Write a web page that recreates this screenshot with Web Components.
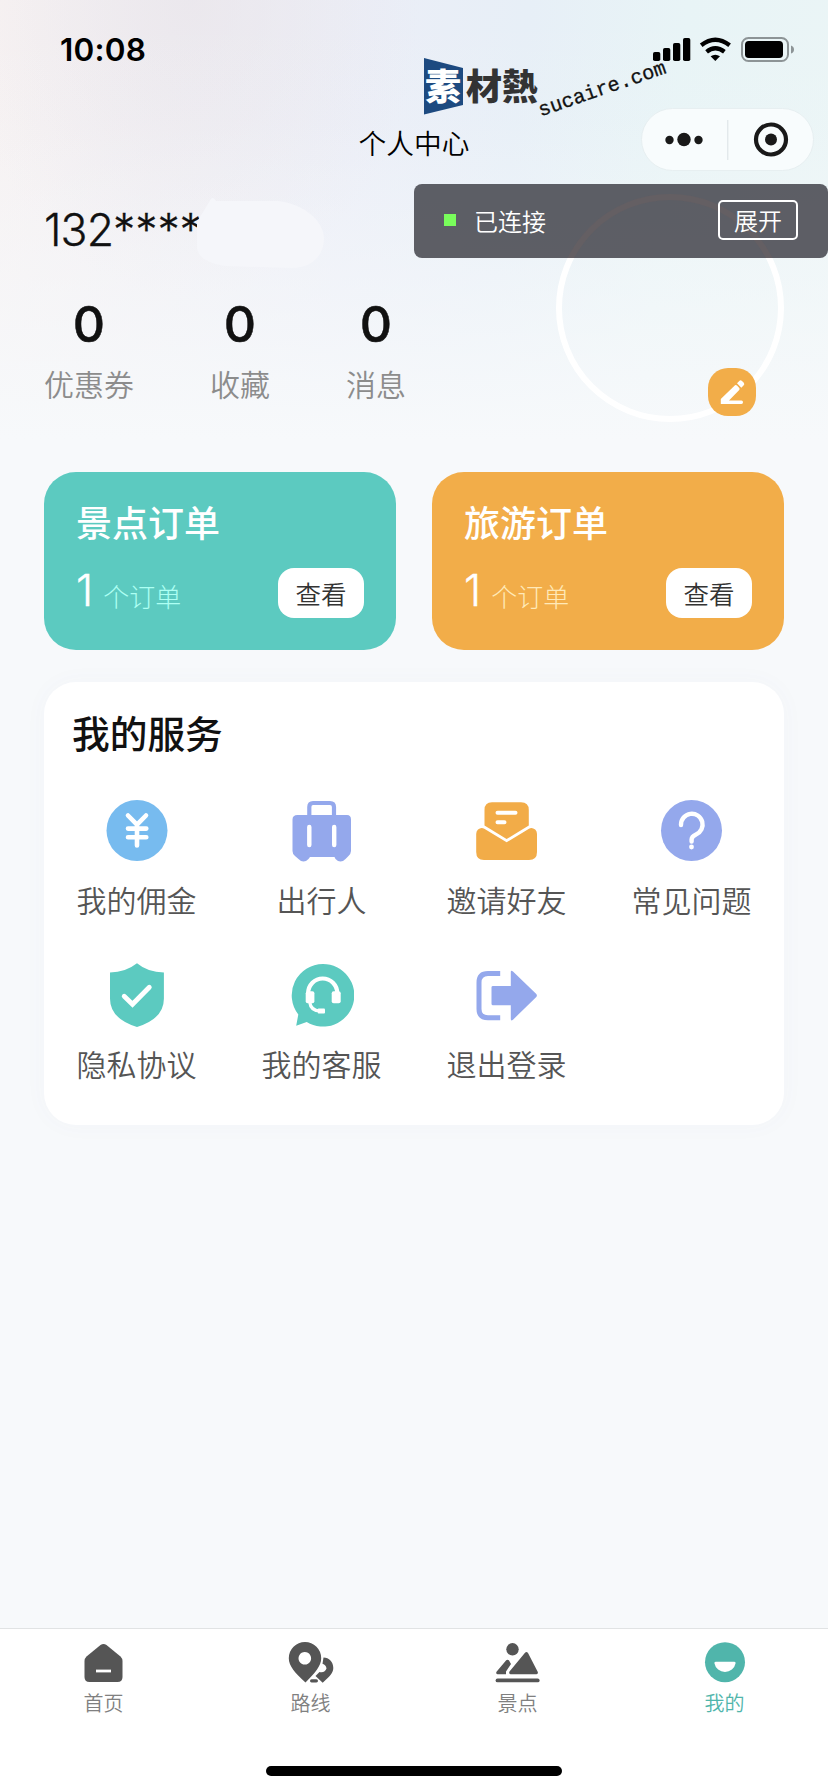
<!DOCTYPE html>
<html lang="zh-CN">
<head>
<meta charset="utf-8">
<title>个人中心</title>
<style>
html,body{margin:0;padding:0}
body{width:828px;height:1792px;overflow:hidden;background:#f7f9fb;font-family:"Noto Sans CJK SC",sans-serif}
</style>
</head>
<body>
<profile-page></profile-page>
<script>
const define = (name, css, html) => customElements.define(name, class extends HTMLElement {
  constructor() {
    super();
    const t = document.createElement('template');
    t.innerHTML = `<style>*{box-sizing:border-box}svg{display:block}${css}</style>${typeof html === 'function' ? html(this) : html}`;
    this.attachShadow({mode: 'open'}).append(t.content.cloneNode(true));
  }
});

const ICONS = {
  yen: `<circle cx="33" cy="32.500" r="30.500" fill="#77bbef"/><path d="M24 17.500 33 26.700 42 17.500M33 27V47.500M24 30.600H42.300M24 39.300H42.300" stroke="#fff" stroke-width="4.600" stroke-linecap="round" stroke-linejoin="round" fill="none"/>`,
  bag: `<g transform="translate(1 0)"><path d="M19.300 19V9Q19.300 5 23 5H40Q44 5 44 9V19" fill="none" stroke="#94a8ec" stroke-width="4.200"/><path d="M7.500 17H57Q61 17 61 21.500V53Q61 56 58 58.500L55.500 61Q50.500 66 45.500 61L44.500 59H20L18.500 61Q13.500 66 8.500 61L5 58Q2.500 56 2.500 53V21.500Q2.500 17 7.500 17Z" fill="#94a8ec"/><path d="M19.300 29V47M44.200 29V47" stroke="#fff" stroke-width="4.400" stroke-linecap="round"/></g>`,
  mail: `<path d="M10.500 27.500V12Q10.500 4.300 18 4.300H47Q54.800 4.300 54.800 12V27.500L32.600 41Z" fill="#f2ac48"/><path d="M23.500 14.700H41.500M23.500 24.300H30.500" stroke="#fff" stroke-width="4" stroke-linecap="round"/><path d="M32.600 44.300 10.300 30.700Q7 29 4 31.600Q2.200 33.200 2.200 36V54Q2.200 62 10 62H55Q63 62 63 54V36Q63 33.200 61.200 31.600Q58 29 55 30.700Z" fill="#f2ac48"/>`,
  help: `<circle cx="32.500" cy="32.500" r="30.500" fill="#94a8ec"/><path d="M22 27V26.600A10.800 10.800 0 1 1 37 36.500Q32.600 38.500 32.600 41.500V43.500" fill="none" stroke="#fff" stroke-width="4.400" stroke-linecap="round"/><circle cx="32.500" cy="49" r="2.400" fill="#fff"/>`,
  shield: `<g transform="translate(.7 .7)"><path d="M32.300 .500Q43 9.500 59.200 9.700V36Q59.200 56 32.300 64.300Q5.300 56 5.300 36V9.700Q21 9.500 32.300 .500Z" fill="#5ccac0"/><path d="M19.500 33.500 27.800 41.600 44.600 24.500" fill="none" stroke="#fff" stroke-width="4.800" stroke-linecap="round"/></g>`,
  service: `<g transform="translate(.7 0)"><path d="M33.300 2A31.300 31.300 0 1 1 17 60L6.500 63.800L8.600 52.500A31.300 31.300 0 0 1 33.300 2Z" fill="#5ccac0"/><path d="M18.500 31A14.500 14.500 0 0 1 47.500 31" fill="none" stroke="#fff" stroke-width="4.200"/><rect x="16" y="29.300" width="8.700" height="12" rx="2" fill="#fff"/><rect x="42" y="29.300" width="9" height="12" rx="2" fill="#fff"/><path d="M20 40Q21 48.500 30 49" fill="none" stroke="#fff" stroke-width="3.200"/><rect x="28" y="46.500" width="7.300" height="5" rx="1" fill="#fff"/></g>`,
  logout: `<path d="M26.200 11.600H14Q5 11.600 5 20.600V47Q5 55.700 14 55.700H26.200" fill="none" stroke="#94a8ec" stroke-width="5"/><path d="M17.500 25.300Q17.500 24 19 24H36.800V10Q36.800 7.700 39 9.500L62.300 32Q63.500 33.500 62.300 35L39 57.700Q36.800 59.500 36.800 57V43.300H19Q17.500 43.300 17.500 41.800Z" fill="#94a8ec"/>`,
  home: `<path d="M20.500 3Q23.500 .800 26.500 3L40.500 14.500Q42.500 16.500 42.500 19V35Q42.500 40 37.500 40H9.500Q4.500 40 4.500 35V19Q4.500 16.500 6.500 14.500Z" fill="#555"/><path d="M16 29H31" stroke="#fff" stroke-width="2.800"/>`,
  route: `<path fill="#555" fill-rule="evenodd" d="M18 0A16.200 16.200 0 0 1 34.200 16.200C34.200 24 28 31 18.500 40.500C8 31 1.800 24 1.800 16.200A16.200 16.200 0 0 1 18 0ZM17.800 10A6.300 6.300 0 1 0 17.801 10Z"/><path fill="#555" d="M36.500 15.500C42 15.500 46.300 20 46.300 26C46.300 31 42.500 34.500 35.700 40.700L28.500 34L32.500 30Q38 31 39.500 26.500Q39 23 35.500 21.800Z"/><rect x="23" y="37.200" width="8" height="3.200" rx="1.600" fill="#555"/>`,
  spot: `<circle cx="18.500" cy="7.300" r="6.200" fill="#555"/><path fill="#555" d="M2.500 29.800 12.200 18.300Q13.500 17 14.900 18.300L17 22L12 29.500V32.300H3.500Q1.500 32 2.500 29.800ZM15.500 29.500 31 10.800Q32.500 9.300 34 11L43.800 30Q44.300 32 42.500 32.300H16.500Q14.500 31.700 15.500 29.500Z"/><rect x="1.600" y="36.500" width="44" height="3.800" rx="1.900" fill="#555"/>`,
  me: `<circle cx="24" cy="20.200" r="20" fill="#50b5ab"/><path d="M14.600 19.800H33.400Q34.900 19.800 34.600 21.300A10.800 10.800 0 0 1 13.400 21.300Q13.100 19.800 14.600 19.800Z" fill="#fff"/>`
};

define('status-bar', `
:host{display:flex;justify-content:space-between;height:100px;padding:32px 33px 0 60px}
time{font:600 31.500px/36px Inter,sans-serif;color:#000;letter-spacing:.2px}
svg{margin-top:4px}`, `
<time>10:08</time>
<svg width="144" height="28" viewBox="651 36 144 28">
<g fill="#000"><rect x="653" y="52" width="7.300" height="9" rx="1.800"/><rect x="663" y="48" width="7.300" height="13" rx="1.800"/><rect x="673" y="43" width="7.300" height="18" rx="1.800"/><rect x="683" y="38" width="7.300" height="23" rx="1.800"/>
<path d="M715.300 61 710.600 56.300Q715.300 53 720 56.300Z"/></g>
<g fill="none" stroke="#000" stroke-width="4.300"><path d="M701.200 45.300Q715.300 34.200 729.600 45.300"/><path d="M706.600 51.800Q715.300 44.700 724.400 51.800"/></g>
<rect x="742" y="38" width="46" height="23" rx="6.500" fill="none" stroke="#8d9496" stroke-width="2"/><rect x="745" y="41" width="38" height="17" rx="3.800"/><path d="M791 45.500Q794 46.500 794 49.500T791 53.500Z" fill="#8d9496"/></svg>`);

define('capsule-menu', `
:host{display:flex;align-items:center;width:173px;height:63px;border-radius:32px;background:#f8fcfd;border:1px solid #e7eff1}`, `
<svg width="171" height="61" viewBox="0 0 171 61"><g fill="#191919"><circle cx="27.500" cy="31" r="4.200"/><circle cx="42" cy="30.500" r="6.700"/><circle cx="56.500" cy="31" r="4.200"/><circle cx="129" cy="30.500" r="6"/></g><circle cx="129" cy="30.500" r="15" fill="none" stroke="#191919" stroke-width="4.200"/><path d="M85.800 11V51" stroke="#dbe2e4"/></svg>`);

define('nav-bar', `
:host{display:grid;grid-template-columns:1fr auto 1fr;height:88px;align-items:center;padding-right:14px}
h1{grid-column:2;margin:-4px -14px 0 0;font:350 27.700px/40px "Noto Sans CJK SC",sans-serif;color:#000}
capsule-menu{justify-self:end;margin-bottom:9px}`, `<h1>个人中心</h1><capsule-menu></capsule-menu>`);

define('stat-item', `
:host{display:flex;flex-direction:column;align-items:center}
b{font:500 50px/60px Inter,sans-serif;color:#111;-webkit-text-stroke:.5px #111}
span{font:350 30px/44px "Noto Sans CJK SC",sans-serif;color:#8c8c8c;margin-top:7px}`, `<b><slot name="n"></slot></b><span><slot></slot></span>`);

define('user-avatar', `
:host{display:block;position:relative;width:228px;height:228px;border:6px solid #fff;border-radius:50%}
i{position:absolute;right:22px;bottom:0;width:48px;height:48px;border-radius:20px;background:#f2ad49}`, `
<i><svg width="48" height="48" viewBox="0 0 48 48"><path fill="#fff" d="M12.800 36V31L27 17.300Q28 16.500 29 17.500L31.300 20Q32 21 31.200 22L21 32.500H33.500Q35 32.500 35 34.200T33.500 36ZM29 15.300 31.300 13Q32.500 11.500 34 13L35.800 14.800Q37 16.200 35.500 17.500L33.300 19.700Z"/></svg></i>`);

define('profile-head', `
:host{display:flex;justify-content:space-between;height:284px;padding:6px 44px 0;position:relative}
.phone{font:300 44.500px/60px Inter,sans-serif;color:#111;-webkit-text-stroke:.3px #111;margin-top:6px;white-space:nowrap;letter-spacing:-.9px;width:170px}
.phone span{letter-spacing:-.1px}
.stats{display:flex;gap:76px;margin-top:34px}
.mask{position:absolute;left:190px;top:8px}`, `
<div><div class="phone">132<span>****</span></div><div class="stats">
<stat-item><span slot="n">0</span>优惠券</stat-item><stat-item><span slot="n">0</span>收藏</stat-item><stat-item><span slot="n">0</span>消息</stat-item></div></div>
<svg class="mask" width="140" height="76" viewBox="190 196 140 76"><path d="M197 222 211 199Q213 196 216 201H278C305 204 324 222 324 238C324 257 310 268 292 268L226 266Q197 262 197 246Z" fill="#f5f6fa"/></svg>
<user-avatar></user-avatar>`);

define('order-card', `
:host{display:flex;flex-direction:column;height:178px;border-radius:32px;background:var(--bg);padding:24px 32px 0}
h2{margin:0;font:500 36px/50px "Noto Sans CJK SC",sans-serif;color:#fff}
div{display:flex;align-items:center;margin-top:22px;height:50px}
b{font:300 43.500px/50px Inter,sans-serif;color:#fff;-webkit-text-stroke:.4px #fff;margin-top:-6px}
span{font:300 26px/36px "Noto Sans CJK SC",sans-serif;color:var(--sub);margin:5px auto 0 10px}
button{all:unset;box-sizing:border-box;width:86px;height:50px;border-radius:16px;background:#fff;color:#333;text-align:center;font:350 25.500px/46px "Noto Sans CJK SC",sans-serif}`, `
<h2><slot></slot></h2><div><b>1</b><span>个订单</span><button>查看</button></div>`);

define('service-item', `
:host{display:flex;flex-direction:column;align-items:center;height:164px}
span{font:350 30px/44px "Noto Sans CJK SC",sans-serif;color:#555;margin-top:14px}`,
  el => `<svg width="65" height="65" viewBox="0 0 65 65">${ICONS[el.getAttribute('icon')]}</svg><span><slot></slot></span>`);

define('service-panel', `
:host{display:block;height:443px;margin:32px 44px 0;border-radius:32px;background:#fff;box-shadow:0 0 24px rgba(80,110,150,.03)}
h2{margin:0;padding:24px 0 0 28px;font:500 37.700px/52px "Noto Sans CJK SC",sans-serif;color:#111}
div{display:grid;grid-template-columns:repeat(4,1fr);padding-top:40px}`, `<h2>我的服务</h2><div><slot></slot></div>`);

define('tab-item', `
:host{display:flex;flex-direction:column;align-items:center;flex:1;padding-top:13px;color:#808080}
:host([active]){color:#50b5ab}
span{font:350 20px/28px "Noto Sans CJK SC",sans-serif;margin-top:6px}`,
  el => `<svg width="47" height="41" viewBox="0 0 47 41">${ICONS[el.getAttribute('icon')]}</svg><span><slot></slot></span>`);

define('tab-bar', `
:host{display:flex;flex-direction:column;align-items:center;height:164px;margin-top:auto;background:#fff;border-top:1px solid #e1e3e4}
nav{display:flex;width:100%;height:137px}
i{width:296px;height:10px;border-radius:5px;background:#000}`, `<nav><slot></slot></nav><i></i>`);

define('debug-panel', `
:host{position:absolute;left:414px;top:184px;width:414px;height:74px;display:flex;align-items:center;padding:0 30px;border-radius:8px;background:rgba(84,85,93,.95);color:#fff;font:350 24px/36px "Noto Sans CJK SC",sans-serif}
svg{position:absolute;left:0;top:0}
i{width:12px;height:12px;background:#79fd5b;margin-top:-2px}
span{margin:-1px auto 0 18px}
button{all:unset;box-sizing:border-box;position:relative;width:80px;height:40px;border:2px solid #fff;border-radius:5px;text-align:center;line-height:34px;margin-top:-2px}`, `<svg width="414" height="74"><circle cx="256" cy="124" r="111" fill="none" stroke="#645f63" stroke-width="6"/></svg><i></i><span>已连接</span><button>展开</button>`);

define('brand-mark', `
:host{position:absolute;left:424px;top:58px;width:250px;height:64px}
.bg{position:absolute;inset:0}
.name{position:absolute;left:1px;top:0;font:900 36px/52px "Noto Sans CJK TC",sans-serif;color:#333;display:flex;white-space:nowrap}
.name b{font:inherit;color:#fff;margin-right:5px}
.url{position:absolute;left:119px;top:41px;font:400 20.300px/24px "Liberation Mono",monospace;color:#111;-webkit-text-stroke:.3px #111;white-space:nowrap;transform-origin:0 100%;transform:rotate(-19deg)}`, `
<svg class="bg" width="40" height="58"><path d="M0 0 39 10V47L0 56.500Z" fill="#1d4a80"/></svg>
<div class="name"><b>素</b>材熱</div><div class="url">sucaire.com</div>`);

define('profile-page', `
:host{display:flex;flex-direction:column;position:relative;width:828px;height:1792px;background:
linear-gradient(180deg,rgba(247,249,251,0) 0,rgba(247,249,251,.08) 120px,rgba(247,249,251,.45) 260px,#f7f9fb 440px),
radial-gradient(ellipse 230px 300px at 190px 0,rgba(232,228,234,.65),rgba(232,228,234,0)),
linear-gradient(97deg,#f7f2f2 0,#f1eff3 20%,#ebeef7 42%,#e7eff7 60%,#e8f4f6 78%,#ebf5f6 100%) 0 0/828px 450px no-repeat,#f7f9fb}
.orders{display:grid;grid-template-columns:1fr 1fr;gap:36px;padding:0 44px}`, `
<status-bar></status-bar><nav-bar></nav-bar><profile-head></profile-head>
<div class="orders"><order-card style="--bg:#5ccac0;--sub:#adfff3">景点订单</order-card><order-card style="--bg:#f2ad49;--sub:#ffe9b8">旅游订单</order-card></div>
<service-panel>
<service-item icon="yen">我的佣金</service-item><service-item icon="bag">出行人</service-item><service-item icon="mail">邀请好友</service-item><service-item icon="help">常见问题</service-item>
<service-item icon="shield">隐私协议</service-item><service-item icon="service">我的客服</service-item><service-item icon="logout">退出登录</service-item>
</service-panel>
<tab-bar><tab-item icon="home">首页</tab-item><tab-item icon="route">路线</tab-item><tab-item icon="spot">景点</tab-item><tab-item icon="me" active>我的</tab-item></tab-bar>
<debug-panel></debug-panel><brand-mark></brand-mark>`);
</script>
</body>
</html>
